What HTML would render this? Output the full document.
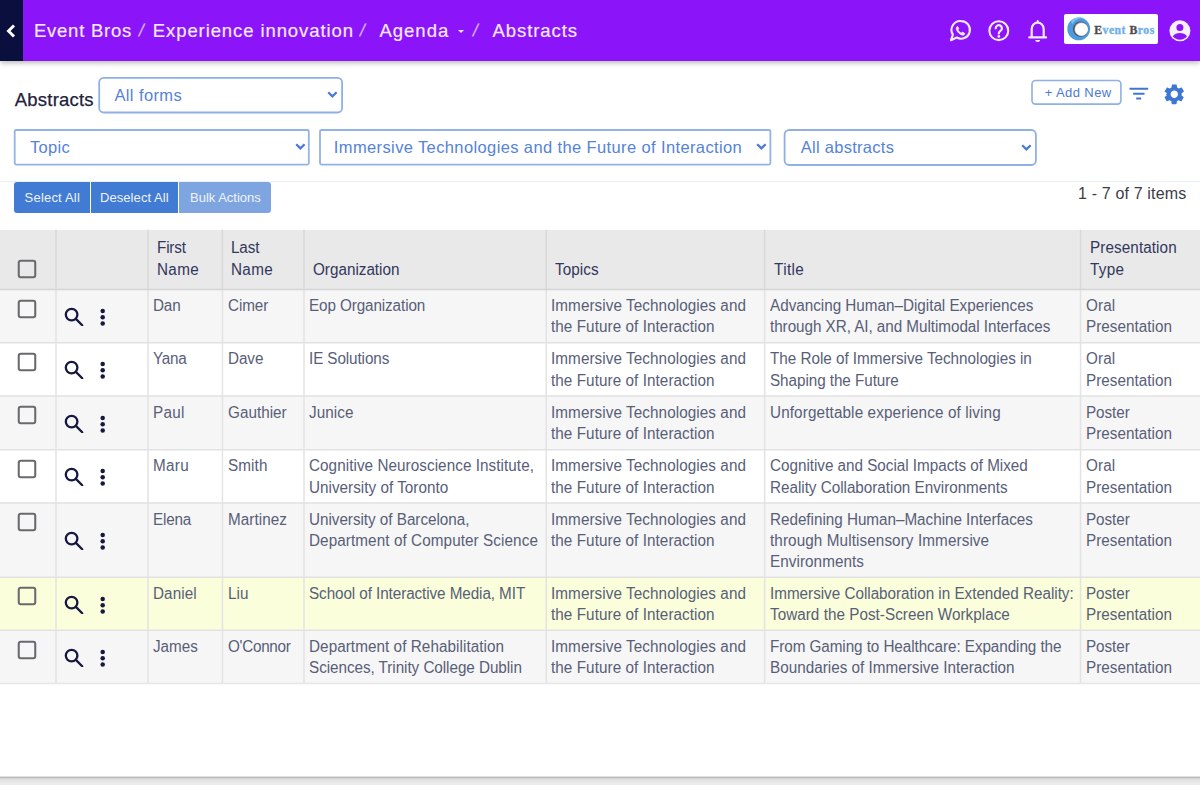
<!DOCTYPE html>
<html lang="en">
<head>
<meta charset="utf-8">
<title>Abstracts</title>
<style>
*{box-sizing:border-box;margin:0;padding:0}
html,body{width:1200px;height:785px;overflow:hidden;background:#fff}
body{font-family:"Liberation Sans",sans-serif;position:relative;color:#4b5070}
.abs{position:absolute}
/* top bar */
#topbar{left:0;top:0;width:1200px;height:61px;background:#8b14f9;box-shadow:0 2px 5px rgba(0,0,0,.28)}
#back{left:0;top:0;width:23px;height:61px;background:#0b0f3d}
#back svg{position:absolute;left:6px;top:23.500px;width:10px;height:14px;fill:none;stroke:#fff;stroke-width:2.900}
#crumbs span{top:18px;height:26px;line-height:26px;font-size:18.500px;color:#f3e8ff;white-space:nowrap;-webkit-text-stroke:.2px #f3e8ff}
#crumbs .sep{color:#cba6f7;font-size:17px;transform:skewX(-12deg)}
#crumbs .car{top:29.500px;width:0;height:0;border-left:3.500px solid transparent;border-right:3.500px solid transparent;border-top:3.500px solid #f3e8ff}
.ico{fill:none;stroke:#fff;stroke-width:2}
/* toolbar */
#lbl{left:14px;top:86.800px;font-size:18.500px;line-height:26px;color:#22223a;-webkit-text-stroke:.25px #22223a;white-space:nowrap}
.sel{border:0 solid transparent;background:#fff;color:#5583d9;white-space:nowrap;overflow:hidden}
.sel svg{position:absolute;width:10.800px;height:7.200px;fill:none;stroke:#4a7ad6;stroke-width:1.900}
.btn{color:#eef3fb;font-size:13px;text-align:left;white-space:nowrap;height:30.600px;line-height:31.800px;top:182.300px;letter-spacing:.08px}
#hr{left:0;top:181px;width:1200px;height:1px;background:#e9f0fb}
#cnt{left:1077px;top:182.700px;font-size:16px;line-height:22px;color:#3c3c46;white-space:nowrap}
#add{left:1031px;top:79.500px;width:91px;height:25.500px;border:0;border-radius:4px;color:#4a7ad6;font-size:13px;line-height:25.500px;padding-left:13px;white-space:nowrap}
/* table */
table{border-collapse:collapse;border-spacing:0;table-layout:fixed;width:1200px;left:0;top:229.600px;font-size:15.800px;line-height:21.300px}
th,td{border:0;vertical-align:top;text-align:left;font-weight:400;overflow:hidden;white-space:nowrap}
.l{display:block;width:max-content}
table .l{transform:scaleX(.966);transform-origin:0 0}
th{background:#e9e9e9;color:#32375c;vertical-align:bottom;padding:0 0 9.500px 9.600px;height:59.950px}
td{padding:5.650px 0 4.100px 6.100px;color:#585e78}
tr.o td{background:#f6f6f6}
tr.e td{background:#fff}
tr.y td{background:#fafedb}
.cb{display:block;width:20px;height:20px;margin-left:17.400px;fill:none;stroke:#6a6a6e;stroke-width:2.050}
td.c,th:first-child{padding-left:0}
td.c{padding-top:9.300px}
th .cb{margin-bottom:1px}
td.a{vertical-align:middle;padding:0 0 0 6px}
.act{display:block;width:48px;height:20px;fill:none;stroke:#15183f;stroke-width:2.300;stroke-linecap:round}
.act .d{fill:#15183f;stroke:none}
#foot{left:0;top:776px;width:1200px;height:9px;background:linear-gradient(to bottom,#f4f4f4 0,#b9b9b9 1.400px,#d4d4d4 2.500px,#e2e2e2 4px,#ebebeb 7px)}
</style>
</head>
<body>
<div id="topbar" class="abs"></div>
<div id="back" class="abs"><svg viewBox="0 0 10 14"><path d="M8 1.5L2.5 7L8 12.5"/></svg></div>
<div id="crumbs">
<span class="abs" style="left:34px"><span class="l" id="bc0" style="letter-spacing:0.744px">Event Bros</span></span>
<span class="abs sep" style="left:138.500px">/</span>
<span class="abs" style="left:153px"><span class="l" id="bc1" style="letter-spacing:0.904px;margin-left:-0.20px">Experience innovation</span></span>
<span class="abs sep" style="left:360px">/</span>
<span class="abs" style="left:378px"><span class="l" id="bc2" style="letter-spacing:1.008px;margin-left:1.40px">Agenda</span></span>
<span class="abs car" style="left:458px"></span>
<span class="abs sep" style="left:472.500px">/</span>
<span class="abs" style="left:491px"><span class="l" id="bc3" style="letter-spacing:0.915px;margin-left:1.60px">Abstracts</span></span>
</div>

<!-- header icons -->
<svg class="abs" style="left:0;top:0;width:1200px;height:60px" viewBox="0 0 1200 60" fill="none" stroke="#f5eaff" stroke-width="2.100" stroke-linecap="round" stroke-linejoin="round">
<!-- chat / phone -->
<path d="M961.200 21.100a8.800 8.800 0 1 1-4.500 16.400l-5.700 2.700 1.900-5.600a8.800 8.800 0 0 1 8.300-13.500z"/>
<path d="M957.300 26.200c-.9.900-1 2.300-.2 4 1.200 2.400 3.200 4.300 5.700 5.400 1.600.7 2.800.4 3.600-.5.500-.600.400-1.300-.2-1.600l-1.700-.9c-.5-.3-.9-.1-1.300.3-.4.500-.8.600-1.300.3-1.300-.700-2.300-1.700-3-3-.3-.5-.100-.9.300-1.300.4-.4.500-.8.200-1.300l-.8-1.500c-.3-.5-.8-.5-1.300.1z" fill="#f5eaff" stroke-width=".9" transform="translate(960.300 30.600) scale(.84) translate(-961.400 -30.500)"/>
<!-- help -->
<circle cx="998.800" cy="30.700" r="9.450"/>
<path d="M995.700 28.300a3.100 3.100 0 1 1 4.800 2.600c-1.100.7-1.700 1.300-1.700 2.500" stroke-width="2.200"/>
<circle cx="998.800" cy="36.400" r="1.350" fill="#f5eaff" stroke="none"/>
<!-- bell -->
<path d="M1037.700 21.200v.8M1031.700 37.200v-8.300a6 6.200 0 0 1 12 0v8.300M1029.300 37.400h16.800" stroke-width="2.200"/>
<path d="M1035.200 40.100h5a2.500 2 0 0 1-5 0z" fill="#f5eaff" stroke="none"/>
</svg>
<div class="abs" style="left:1063.600px;top:14.100px;width:94.900px;height:29.700px;background:#fff;border-radius:2px"></div>
<svg class="abs" style="left:1064px;top:14px;width:30px;height:30px" viewBox="1064 14 30 30" fill="none">
<circle cx="1078.700" cy="28.900" r="11.400" fill="#4c9be2"/>
<path d="M1071 21.500a11 11 0 0 1 14.500-2.500a10.500 10.500 0 0 0-13.300 5z" fill="#86c2f2"/>
<circle cx="1080.600" cy="29.100" r="7.700" fill="#50545c"/>
<circle cx="1081.200" cy="29.200" r="6.900" fill="#a4a9b0"/>
<circle cx="1081.500" cy="29.300" r="6.400" fill="#fff"/>
</svg>
<div class="abs" style="left:1094.200px;top:21.900px;font-family:'Liberation Serif',serif;font-weight:700;font-size:11.700px;line-height:18px;color:#6fb0ec;white-space:nowrap;letter-spacing:.52px;-webkit-text-stroke:.35px currentColor"><span style="color:#4b4b4f">E</span>vent <span style="color:#4b4b4f">B</span>ros</div>
<svg class="abs" style="left:1168px;top:19px;width:24px;height:24px" viewBox="1168 19 24 24"><circle cx="1179.900" cy="30.800" r="10.500" fill="#f8f0ff"/><circle cx="1179.900" cy="27.600" r="3.500" fill="#8b14f9"/><path d="M1172.800 36.200c1.600-2.300 4.200-3.300 7.100-3.300s5.500 1 7.100 3.300a8.800 8.800 0 0 1-14.200 0z" fill="#8b14f9"/></svg>

<!-- toolbar -->
<div id="lbl" class="abs"><span class="l" id="lblt" style="letter-spacing:0.212px;margin-left:0.80px">Abstracts</span></div>
<div class="abs sel" style="left:100px;top:79px;width:241px;height:33px;font-size:16.500px;line-height:33px;padding-left:13px"><span class="l" id="s0" style="letter-spacing:0.398px;margin-left:1.40px">All forms</span><svg viewBox="0 0 9 6" style="left:227px;top:12.300px"><path d="M1 1l3.500 3.500L8 1"/></svg></div>
<div id="add" class="abs"><span class="l" id="addt" style="letter-spacing:0.388px;margin-left:0.80px">+ Add New</span></div>
<svg class="abs" style="left:1125px;top:84px;width:28px;height:20px" viewBox="1125 84 28 20"><path d="M1129.500 88.700h18.700M1133.200 93.700h11.300M1136.200 98.600h5" stroke="#3f76d2" stroke-width="2" fill="none"/></svg>
<svg class="abs" style="left:1162px;top:82.100px;width:24.600px;height:24.600px" viewBox="0 0 24 24"><path fill="#3f76d2" d="M19.140 12.940c.040-.3.060-.61.060-.94 0-.32-.020-.64-.070-.94l2.030-1.580a.49.490 0 0 0 .12-.61l-1.920-3.320a.488.488 0 0 0-.59-.22l-2.390.96c-.5-.38-1.030-.7-1.620-.94l-.36-2.540a.484.484 0 0 0-.48-.41h-3.840c-.24 0-.43.170-.47.410l-.36 2.540c-.59.240-1.130.57-1.620.94l-2.390-.96c-.22-.08-.47 0-.59.220L2.740 8.870c-.12.210-.8.470.12.610l2.030 1.580c-.5.300-.9.630-.9.940s.2.640.7.940l-2.030 1.580a.49.490 0 0 0-.12.610l1.920 3.320c.12.220.37.290.59.220l2.390-.96c.5.380 1.030.7 1.620.94l.36 2.540c.5.240.24.410.48.410h3.840c.24 0 .44-.17.470-.41l.36-2.540c.59-.24 1.130-.56 1.620-.94l2.390.96c.22.080.47 0 .59-.22l1.920-3.320c.12-.22.070-.47-.12-.61l-2.010-1.580zM12 15.600c-1.980 0-3.600-1.620-3.600-3.600s1.620-3.600 3.600-3.600 3.600 1.620 3.600 3.600-1.620 3.600-3.600 3.600z"/></svg>

<div class="abs sel" style="left:16px;top:131px;width:292px;height:33px;font-size:16.500px;line-height:33px;padding-left:13px"><span class="l" id="s1" style="letter-spacing:0.300px;margin-left:1.00px">Topic</span><svg viewBox="0 0 9 6" style="left:278.800px;top:12.400px"><path d="M1 1l3.500 3.500L8 1"/></svg></div>
<div class="abs sel" style="left:321px;top:131px;width:448px;height:33px;font-size:16.500px;line-height:33px;padding-left:13px"><span class="l" id="s2" style="letter-spacing:0.380px;margin-left:-0.20px">Immersive Technologies and the Future of Interaction</span><svg viewBox="0 0 9 6" style="left:435px;top:12.400px"><path d="M1 1l3.500 3.500L8 1"/></svg></div>
<div class="abs sel" style="left:786px;top:131px;width:249px;height:33px;font-size:16.500px;line-height:33px;padding-left:13px"><span class="l" id="s3" style="letter-spacing:0.273px;margin-left:1.80px">All abstracts</span><svg viewBox="0 0 9 6" style="left:235.200px;top:12.600px"><path d="M1 1l3.500 3.500L8 1"/></svg></div>

<svg class="abs" style="left:0;top:70px;width:1200px;height:110px" viewBox="0 70 1200 110" fill="none" stroke="#8fb0e7" stroke-width="1.800">
<rect x="99.200" y="77.900" width="242.900" height="34.600" rx="4.500"/>
<rect x="784.600" y="130" width="251.300" height="35" rx="4.500"/>
<rect x="14.700" y="130" width="294.100" height="34.600" rx="1.500" stroke="#93b2e8"/>
<rect x="320" y="130" width="450.400" height="34.600" rx="1.500" stroke="#93b2e8"/>
<rect x="1032" y="80.500" width="88.900" height="23.600" rx="3.500" stroke-width="1.600"/>
</svg>
<div id="hr" class="abs"></div>
<div class="abs btn" style="left:14.200px;width:76px;background:#417bd3;border-radius:3px 0 0 3px;padding-left:10px"><span class="l" id="b0" style="letter-spacing:0.198px;margin-left:0.40px">Select All</span></div>
<div class="abs btn" style="left:91px;width:86.700px;background:#417bd3;padding-left:9px"><span class="l" id="b1" style="letter-spacing:0.069px">Deselect All</span></div>
<div class="abs btn" style="left:178.500px;width:92.800px;background:#7fa5e0;border-radius:0 3px 3px 0;padding-left:11px"><span class="l" id="b2" style="letter-spacing:-0.015px;margin-left:0.60px">Bulk Actions</span></div>
<div id="cnt" class="abs"><span class="l" id="cntt" style="letter-spacing:0.157px;margin-left:1.00px">1 - 7 of 7 items</span></div>

<table class="abs">
<colgroup><col style="width:56.00px"><col style="width:92.06px"><col style="width:74.39px"><col style="width:81.55px"><col style="width:242.30px"><col style="width:218.33px"><col style="width:315.92px"><col style="width:119.45px"></colgroup>
<tr class="h"><th><svg class="cb" viewBox="0 0 20 20"><rect x="1.750" y="1.750" width="16.500" height="16.400" rx="2"/></svg></th><th></th><th><span class="l" id="h0_0" style="letter-spacing:-0.190px;margin-left:-0.55px">First</span><span class="l" id="h0_1" style="letter-spacing:0.367px;margin-left:-0.55px">Name</span></th><th><span class="l" id="h1_0" style="letter-spacing:-0.120px;margin-left:-0.55px">Last</span><span class="l" id="h1_1" style="letter-spacing:0.320px;margin-left:-0.55px">Name</span></th><th><span class="l" id="h2_0" style="letter-spacing:-0.007px;margin-left:-0.55px">Organization</span></th><th><span class="l" id="h3_0" style="letter-spacing:0.088px;margin-left:-0.55px">Topics</span></th><th><span class="l" id="h4_0" style="letter-spacing:0.395px;margin-left:-0.55px">Title</span></th><th><span class="l" id="h5_0" style="letter-spacing:0.093px;margin-left:-0.55px">Presentation</span><span class="l" id="h5_1" style="letter-spacing:0.287px;margin-left:-0.55px">Type</span></th></tr>
<tr class="o" style="height:53.25px"><td class="c"><svg class="cb" viewBox="0 0 20 20"><rect x="1.750" y="1.750" width="16.500" height="16.400" rx="2"/></svg></td><td class="a"><svg class="act" viewBox="0 -0.700 48 20"><circle cx="9.600" cy="7.900" r="5.800"/><path d="M13.900 12.200L20.200 18.500"/><g class="d"><circle cx="40.700" cy="4.250" r="2.250"/><circle cx="40.700" cy="10.550" r="2.250"/><circle cx="40.700" cy="16.800" r="2.250"/></g></svg></td><td><span class="l" id="r0c0_0" style="letter-spacing:-0.160px;margin-left:-0.90px">Dan</span></td><td><span class="l" id="r0c1_0" style="letter-spacing:-0.125px;margin-left:-0.90px">Cimer</span></td><td><span class="l" id="r0c2_0" style="letter-spacing:-0.113px;margin-left:-0.90px">Eop Organization</span></td><td><span class="l" id="r0c3_0" style="letter-spacing:0.077px;margin-left:-0.90px">Immersive Technologies and</span><span class="l" id="r0c3_1" style="letter-spacing:0.067px;margin-left:-0.90px">the Future of Interaction</span></td><td><span class="l" id="r0c4_0" style="letter-spacing:-0.016px;margin-left:-0.90px">Advancing Human–Digital Experiences</span><span class="l" id="r0c4_1" style="letter-spacing:-0.056px;margin-left:-0.90px">through XR, AI, and Multimodal Interfaces</span></td><td><span class="l" id="r0c5_0" style="letter-spacing:0.120px;margin-left:-0.90px">Oral</span><span class="l" id="r0c5_1" style="letter-spacing:0.025px;margin-left:-0.90px">Presentation</span></td></tr>
<tr class="e" style="height:53.15px"><td class="c"><svg class="cb" viewBox="0 0 20 20"><rect x="1.750" y="1.750" width="16.500" height="16.400" rx="2"/></svg></td><td class="a"><svg class="act" viewBox="0 -0.700 48 20"><circle cx="9.600" cy="7.900" r="5.800"/><path d="M13.900 12.200L20.200 18.500"/><g class="d"><circle cx="40.700" cy="4.250" r="2.250"/><circle cx="40.700" cy="10.550" r="2.250"/><circle cx="40.700" cy="16.800" r="2.250"/></g></svg></td><td><span class="l" id="r1c0_0" style="letter-spacing:-0.240px;margin-left:-0.90px">Yana</span></td><td><span class="l" id="r1c1_0" style="letter-spacing:-0.087px;margin-left:-0.90px">Dave</span></td><td><span class="l" id="r1c2_0" style="letter-spacing:-0.109px;margin-left:-0.90px">IE Solutions</span></td><td><span class="l" id="r1c3_0" style="letter-spacing:0.077px;margin-left:-0.90px">Immersive Technologies and</span><span class="l" id="r1c3_1" style="letter-spacing:0.067px;margin-left:-0.90px">the Future of Interaction</span></td><td><span class="l" id="r1c4_0" style="letter-spacing:-0.024px;margin-left:-0.90px">The Role of Immersive Technologies in</span><span class="l" id="r1c4_1" style="letter-spacing:-0.062px;margin-left:-0.90px">Shaping the Future</span></td><td><span class="l" id="r1c5_0" style="letter-spacing:0.120px;margin-left:-0.90px">Oral</span><span class="l" id="r1c5_1" style="letter-spacing:0.025px;margin-left:-0.90px">Presentation</span></td></tr>
<tr class="o" style="height:53.85px"><td class="c"><svg class="cb" viewBox="0 0 20 20"><rect x="1.750" y="1.750" width="16.500" height="16.400" rx="2"/></svg></td><td class="a"><svg class="act" viewBox="0 -0.700 48 20"><circle cx="9.600" cy="7.900" r="5.800"/><path d="M13.900 12.200L20.200 18.500"/><g class="d"><circle cx="40.700" cy="4.250" r="2.250"/><circle cx="40.700" cy="10.550" r="2.250"/><circle cx="40.700" cy="16.800" r="2.250"/></g></svg></td><td><span class="l" id="r2c0_0" style="letter-spacing:0.273px;margin-left:-0.90px">Paul</span></td><td><span class="l" id="r2c1_0" style="letter-spacing:0.014px;margin-left:-0.90px">Gauthier</span></td><td><span class="l" id="r2c2_0" style="letter-spacing:0.056px;margin-left:-0.90px">Junice</span></td><td><span class="l" id="r2c3_0" style="letter-spacing:0.077px;margin-left:-0.90px">Immersive Technologies and</span><span class="l" id="r2c3_1" style="letter-spacing:0.067px;margin-left:-0.90px">the Future of Interaction</span></td><td><span class="l" id="r2c4_0" style="letter-spacing:0.130px;margin-left:-0.90px">Unforgettable experience of living</span></td><td><span class="l" id="r2c5_0" style="letter-spacing:-0.072px;margin-left:-0.90px">Poster</span><span class="l" id="r2c5_1" style="letter-spacing:0.025px;margin-left:-0.90px">Presentation</span></td></tr>
<tr class="e" style="height:53.15px"><td class="c"><svg class="cb" viewBox="0 0 20 20"><rect x="1.750" y="1.750" width="16.500" height="16.400" rx="2"/></svg></td><td class="a"><svg class="act" viewBox="0 -0.700 48 20"><circle cx="9.600" cy="7.900" r="5.800"/><path d="M13.900 12.200L20.200 18.500"/><g class="d"><circle cx="40.700" cy="4.250" r="2.250"/><circle cx="40.700" cy="10.550" r="2.250"/><circle cx="40.700" cy="16.800" r="2.250"/></g></svg></td><td><span class="l" id="r3c0_0" style="letter-spacing:0.300px;margin-left:-0.90px">Maru</span></td><td><span class="l" id="r3c1_0" style="letter-spacing:0.105px;margin-left:-0.90px">Smith</span></td><td><span class="l" id="r3c2_0" style="letter-spacing:0.060px;margin-left:-0.90px">Cognitive Neuroscience Institute,</span><span class="l" id="r3c2_1" style="letter-spacing:0.021px;margin-left:-0.90px">University of Toronto</span></td><td><span class="l" id="r3c3_0" style="letter-spacing:0.077px;margin-left:-0.90px">Immersive Technologies and</span><span class="l" id="r3c3_1" style="letter-spacing:0.067px;margin-left:-0.90px">the Future of Interaction</span></td><td><span class="l" id="r3c4_0" style="letter-spacing:-0.027px;margin-left:-0.90px">Cognitive and Social Impacts of Mixed</span><span class="l" id="r3c4_1" style="letter-spacing:-0.024px;margin-left:-0.90px">Reality Collaboration Environments</span></td><td><span class="l" id="r3c5_0" style="letter-spacing:0.120px;margin-left:-0.90px">Oral</span><span class="l" id="r3c5_1" style="letter-spacing:0.025px;margin-left:-0.90px">Presentation</span></td></tr>
<tr class="o t" style="height:74.25px"><td class="c"><svg class="cb" viewBox="0 0 20 20"><rect x="1.750" y="1.750" width="16.500" height="16.400" rx="2"/></svg></td><td class="a"><svg class="act" viewBox="0 -0.700 48 20"><circle cx="9.600" cy="7.900" r="5.800"/><path d="M13.900 12.200L20.200 18.500"/><g class="d"><circle cx="40.700" cy="4.250" r="2.250"/><circle cx="40.700" cy="10.550" r="2.250"/><circle cx="40.700" cy="16.800" r="2.250"/></g></svg></td><td><span class="l" id="r4c0_0" style="letter-spacing:-0.200px;margin-left:-0.90px">Elena</span></td><td><span class="l" id="r4c1_0" style="letter-spacing:0.046px;margin-left:-0.90px">Martinez</span></td><td><span class="l" id="r4c2_0" style="letter-spacing:-0.033px;margin-left:-0.90px">University of Barcelona,</span><span class="l" id="r4c2_1" style="letter-spacing:0.086px;margin-left:-0.90px">Department of Computer Science</span></td><td><span class="l" id="r4c3_0" style="letter-spacing:0.077px;margin-left:-0.90px">Immersive Technologies and</span><span class="l" id="r4c3_1" style="letter-spacing:0.067px;margin-left:-0.90px">the Future of Interaction</span></td><td><span class="l" id="r4c4_0" style="letter-spacing:-0.028px;margin-left:-0.90px">Redefining Human–Machine Interfaces</span><span class="l" id="r4c4_1" style="letter-spacing:0.101px;margin-left:-0.90px">through Multisensory Immersive</span><span class="l" id="r4c4_2" style="letter-spacing:0.062px;margin-left:-0.90px">Environments</span></td><td><span class="l" id="r4c5_0" style="letter-spacing:-0.072px;margin-left:-0.90px">Poster</span><span class="l" id="r4c5_1" style="letter-spacing:0.025px;margin-left:-0.90px">Presentation</span></td></tr>
<tr class="y" style="height:53.10px"><td class="c"><svg class="cb" viewBox="0 0 20 20"><rect x="1.750" y="1.750" width="16.500" height="16.400" rx="2"/></svg></td><td class="a"><svg class="act" viewBox="0 -0.700 48 20"><circle cx="9.600" cy="7.900" r="5.800"/><path d="M13.900 12.200L20.200 18.500"/><g class="d"><circle cx="40.700" cy="4.250" r="2.250"/><circle cx="40.700" cy="10.550" r="2.250"/><circle cx="40.700" cy="16.800" r="2.250"/></g></svg></td><td><span class="l" id="r5c0_0" style="letter-spacing:0.068px;margin-left:-0.90px">Daniel</span></td><td><span class="l" id="r5c1_0" style="letter-spacing:0.060px;margin-left:-0.90px">Liu</span></td><td><span class="l" id="r5c2_0" style="letter-spacing:-0.087px;margin-left:-0.90px">School of Interactive Media, MIT</span></td><td><span class="l" id="r5c3_0" style="letter-spacing:0.077px;margin-left:-0.90px">Immersive Technologies and</span><span class="l" id="r5c3_1" style="letter-spacing:0.067px;margin-left:-0.90px">the Future of Interaction</span></td><td><span class="l" id="r5c4_0" style="letter-spacing:-0.019px;margin-left:-0.90px">Immersive Collaboration in Extended Reality:</span><span class="l" id="r5c4_1" style="letter-spacing:0.030px;margin-left:-0.90px">Toward the Post-Screen Workplace</span></td><td><span class="l" id="r5c5_0" style="letter-spacing:-0.072px;margin-left:-0.90px">Poster</span><span class="l" id="r5c5_1" style="letter-spacing:0.025px;margin-left:-0.90px">Presentation</span></td></tr>
<tr class="o" style="height:53.15px"><td class="c"><svg class="cb" viewBox="0 0 20 20"><rect x="1.750" y="1.750" width="16.500" height="16.400" rx="2"/></svg></td><td class="a"><svg class="act" viewBox="0 -0.700 48 20"><circle cx="9.600" cy="7.900" r="5.800"/><path d="M13.900 12.200L20.200 18.500"/><g class="d"><circle cx="40.700" cy="4.250" r="2.250"/><circle cx="40.700" cy="10.550" r="2.250"/><circle cx="40.700" cy="16.800" r="2.250"/></g></svg></td><td><span class="l" id="r6c0_0" style="letter-spacing:-0.025px;margin-left:-0.90px">James</span></td><td><span class="l" id="r6c1_0" style="letter-spacing:-0.294px;margin-left:-0.90px">O'Connor</span></td><td><span class="l" id="r6c2_0" style="letter-spacing:0.062px;margin-left:-0.90px">Department of Rehabilitation</span><span class="l" id="r6c2_1" style="letter-spacing:-0.055px;margin-left:-0.90px">Sciences, Trinity College Dublin</span></td><td><span class="l" id="r6c3_0" style="letter-spacing:0.077px;margin-left:-0.90px">Immersive Technologies and</span><span class="l" id="r6c3_1" style="letter-spacing:0.067px;margin-left:-0.90px">the Future of Interaction</span></td><td><span class="l" id="r6c4_0" style="letter-spacing:-0.075px;margin-left:-0.90px">From Gaming to Healthcare: Expanding the</span><span class="l" id="r6c4_1" style="letter-spacing:0.008px;margin-left:-0.90px">Boundaries of Immersive Interaction</span></td><td><span class="l" id="r6c5_0" style="letter-spacing:-0.072px;margin-left:-0.90px">Poster</span><span class="l" id="r6c5_1" style="letter-spacing:0.025px;margin-left:-0.90px">Presentation</span></td></tr>
</table>
<svg class="abs" id="grid" style="left:0;top:0;width:1200px;height:785px" viewBox="0 0 1200 785">
<path d="M56.00 229.6V289.55" stroke="#d9d9d9" stroke-width="1.500"/>
<path d="M56.00 289.55V683.45" stroke="#e3e3e3" stroke-width="1.500"/>
<path d="M148.06 229.6V289.55" stroke="#d9d9d9" stroke-width="1.500"/>
<path d="M148.06 289.55V683.45" stroke="#e3e3e3" stroke-width="1.500"/>
<path d="M222.45 229.6V289.55" stroke="#d9d9d9" stroke-width="1.500"/>
<path d="M222.45 289.55V683.45" stroke="#e3e3e3" stroke-width="1.500"/>
<path d="M304.00 229.6V289.55" stroke="#d9d9d9" stroke-width="1.500"/>
<path d="M304.00 289.55V683.45" stroke="#e3e3e3" stroke-width="1.500"/>
<path d="M546.30 229.6V289.55" stroke="#d9d9d9" stroke-width="1.500"/>
<path d="M546.30 289.55V683.45" stroke="#e3e3e3" stroke-width="1.500"/>
<path d="M764.63 229.6V289.55" stroke="#d9d9d9" stroke-width="1.500"/>
<path d="M764.63 289.55V683.45" stroke="#e3e3e3" stroke-width="1.500"/>
<path d="M1080.55 229.6V289.55" stroke="#d9d9d9" stroke-width="1.500"/>
<path d="M1080.55 289.55V683.45" stroke="#e3e3e3" stroke-width="1.500"/>
<path d="M0 289.55H1200" stroke="#d4d4d4" stroke-width="1.600"/>
<path d="M0 342.80H1200" stroke="#e2e2e2" stroke-width="1.600"/>
<path d="M0 395.95H1200" stroke="#e2e2e2" stroke-width="1.600"/>
<path d="M0 449.80H1200" stroke="#e2e2e2" stroke-width="1.600"/>
<path d="M0 502.95H1200" stroke="#e2e2e2" stroke-width="1.600"/>
<path d="M0 577.20H1200" stroke="#e2e2e2" stroke-width="1.600"/>
<path d="M0 630.30H1200" stroke="#e2e2e2" stroke-width="1.600"/>
<path d="M0 683.45H1200" stroke="#e6e6e6" stroke-width="1.400"/>
</svg>
<div id="foot" class="abs"></div>
</body>
</html>
